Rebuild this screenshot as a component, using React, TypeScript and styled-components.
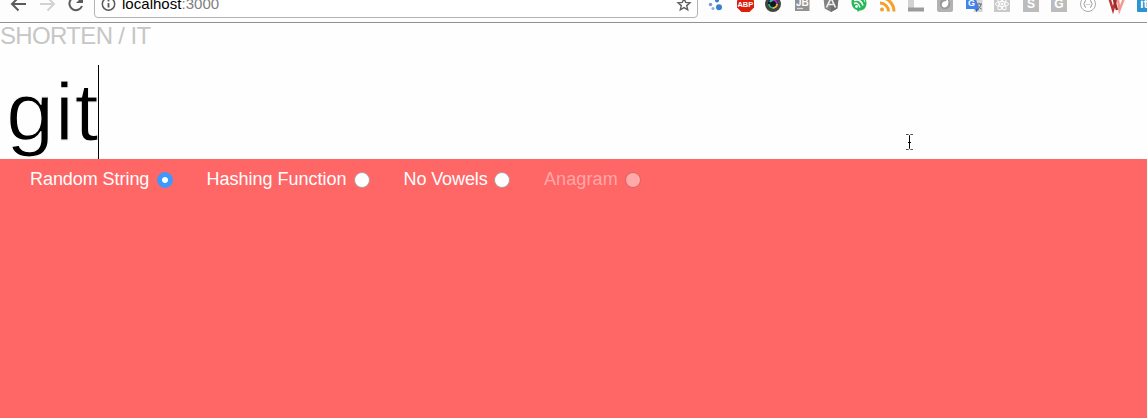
import React, { useState } from "react";
import styled, { createGlobalStyle } from "styled-components";

const GlobalStyle = createGlobalStyle`
  * { box-sizing: border-box; }
  html, body { margin: 0; background: #fefefe; overflow: hidden; }
  body { font-family: "Liberation Sans", Arial, sans-serif; }
`;

const Page = styled.div`
  position: relative;
  display: flex;
  flex-direction: column;
  height: 418px;
  overflow: hidden;
`;

const Toolbar = styled.header`
  display: flex;
  align-items: flex-end;
  flex: none;
  height: 23px;
  overflow: hidden;
  background: #fdfdfd;
  border-bottom: 1px solid #929292;
`;

const ToolbarRow = styled.div`
  display: flex;
  align-items: center;
  flex: none;
  height: 36px;
  width: 1160px;
`;

const NavButtons = styled.div`
  display: flex;
  flex: none;
  width: 94px;
  padding-left: 10px;
  gap: 12px;
`;

const AddressBar = styled.div`
  display: flex;
  align-items: center;
  flex: none;
  width: 604px;
  height: 28px;
  padding: 0 6px;
  border: 1px solid #b3b3b3;
  border-radius: 4px;
  background: #fff;
`;

const Address = styled.span`
  flex: 1;
  margin-left: 6px;
  font-size: 15px;
  line-height: 18px;
  letter-spacing: 0.03px;
  color: #000;
`;

const Port = styled.span`
  color: #808080;
`;

const Extensions = styled.div`
  display: flex;
  margin-left: 4px;
`;

const Slot = styled.span`
  display: flex;
  justify-content: center;
  flex: none;
  width: 28.6px;
`;

const Glyph = styled.svg`
  display: block;
  flex: none;
  overflow: visible;
  font-family: "Liberation Sans", Arial, sans-serif;
`;

const Title = styled.h1`
  flex: none;
  height: 42px;
  margin: 0;
  font-size: 24px;
  font-weight: 400;
  line-height: 25px;
  letter-spacing: -0.65px;
  color: #c6c6c6;
`;

const Entry = styled.div`
  display: flex;
  align-items: stretch;
  flex: none;
  height: 94px;
  padding-left: 6px;
`;

const EntryText = styled.span`
  width: 92px;
  font-size: 81px;
  line-height: 94px;
  letter-spacing: 0.5px;
  white-space: nowrap;
  color: #000;
  transform: scaleX(1.07);
  transform-origin: left center;
  -webkit-text-stroke: 1.2px #fefefe;
`;

const Caret = styled.span`
  position: relative;
  width: 1px;
  background: #000;
`;

const Panel = styled.main`
  flex: 1;
  padding: 9px 30px;
  background: #ff6666;
`;

const Options = styled.div`
  display: flex;
  gap: 34px;
`;

const Option = styled.label<{ $width: number; $tracking: number; $disabled?: boolean }>`
  display: flex;
  align-items: center;
  justify-content: space-between;
  width: ${(p) => p.$width}px;
  font-size: 18px;
  line-height: 22px;
  letter-spacing: ${(p) => p.$tracking}px;
  white-space: nowrap;
  color: ${(p) => (p.$disabled ? "#ffa8a8" : "#fff")};
`;

const Radio = styled.input`
  appearance: none;
  flex: none;
  width: 16px;
  height: 16px;
  margin: 2px 0 0;
  border: 1px solid #b99a9a;
  border-radius: 50%;
  background: #fff;

  &:checked {
    border-color: #3b99fc;
    background: radial-gradient(circle, #fff 2.5px, #3b99fc 3.5px);
  }

  &:disabled {
    border-color: #d96464;
    background: #ffa9a9;
  }
`;

const Pointer = styled.svg`
  position: absolute;
  left: 905px;
  top: 134px;
`;

const extensions = [
  <g fill="#3a7fc8"><circle cx="2.500" cy="8.500" r="1.700" opacity=".75" /><circle cx="9" cy="4.500" r="2" /><circle cx="11" cy="11.300" r="3" /><circle cx="5" cy="12.500" r="1.600" opacity=".6" /></g>,
  <g><path d="M4.500 0h8L17 4.500v7L12.500 16h-8L0 11.500v-7Z" fill="#dc1e0c" /><text x="8.300" y="10.700" textAnchor="middle" fontSize="7.500" fontWeight="700" fill="#fff">ABP</text></g>,
  <g><circle cx="8" cy="8" r="8" fill="#444" /><circle cx="8" cy="8" r="5.200" fill="#141719" /><path d="M5 6a4 4 0 0 1 3-2" stroke="#28c0cc" strokeWidth="2" fill="none" /><path d="M8 4a4 4 0 0 1 4 4" stroke="#9c35c0" strokeWidth="2" fill="none" /><path d="M12 8a4 4 0 0 1-4 4" stroke="#ddb637" strokeWidth="2" fill="none" /><path d="M8 12a4 4 0 0 1-4-4" stroke="#2dac73" strokeWidth="2" fill="none" /></g>,
  <g><path d="M1 0h14.500v15H1Z" fill="#929292" /><text x="8.300" y="9.700" textAnchor="middle" fontSize="10" fontWeight="700" fill="#fff">JB</text><path d="M3 12.500h6" stroke="#ddd" strokeWidth="1.300" /></g>,
  <g><path d="m8 0 7.500 2.500-1.200 10L8 16l-6.300-3.500-1.200-10Z" fill="#828282" /><path d="M8 0v16l6.300-3.500 1.200-10Z" fill="#707070" /><path d="m3.500 11.500 4.500-9.500 4.500 9.500M5.500 8.500h5" stroke="#eee" strokeWidth="1.700" fill="none" /></g>,
  <g fill="none"><path d="M.5 6C.5 1 4 0 8 0s7.500 2 7.500 7-3 7.500-7 7.500l-1.500 1.500-1-2C2.500 13 .5 10 .5 6Z" fill="#27b858" /><path d="M3 7.500q4-2 6 4M3 4.500q7-2 9 5" stroke="#fff" strokeWidth="1.500" /><path d="M9.500 1A6 6 0 0 1 14 6" stroke="#d7f2df" /><circle cx="5.500" cy="10.500" r="1.400" fill="#fff" /></g>,
  <g fill="none" stroke="#f2a12f" strokeWidth="3"><path d="M0 7a8.500 8.500 0 0 1 8.500 8.500M0 1.500a14 14 0 0 1 14 14" /><circle cx="2" cy="13.500" r="2" fill="#f2a12f" stroke="none" /></g>,
  <g><path d="M0 0h6v12H0Z" fill="#d2d2d2" /><path d="M0 11.500h16v4H0Z" fill="#9b9b9b" /></g>,
  <g><rect width="16" height="16" rx="2" fill="#b2b2b2" /><circle cx="8" cy="8" r="5.300" fill="#999" /><path d="M10.500 3.500c2 3 .5 8-3 8-3-.5-3.500-3.500-1.500-5.500 1.500-1 3-.5 4.500-2.500Z" fill="#fff" /></g>,
  <g><path d="M6 4h10.500v12H8Z" fill="#d5d5d5" /><path d="M0 0h9l4 13H0Z" fill="#3f83ed" /><text x="5.500" y="9.800" textAnchor="middle" fontSize="9" fontWeight="700" fill="#fff">G</text><path d="m9 13 4 0-2.500 3Z" fill="#285fc5" /><path d="M10.500 8h5.500m-3-1v1m2 0c-.5 3-2 4-3.500 5m0-4c1 2 2 3 4 4" stroke="#606b7c" fill="none" /></g>,
  <g><rect width="16" height="16" fill="#c9c9c9" /><g fill="none" stroke="#fff" strokeWidth="1"><ellipse cx="8" cy="8" rx="6.500" ry="2.500" /><ellipse cx="8" cy="8" rx="6.500" ry="2.500" transform="rotate(60 8 8)" /><ellipse cx="8" cy="8" rx="6.500" ry="2.500" transform="rotate(120 8 8)" /></g><circle cx="8" cy="8" r="1.300" fill="#fff" /></g>,
  <g><rect width="16" height="16" fill="#bcbcbc" /><text x="8" y="12.300" textAnchor="middle" fontSize="12" fontWeight="700" fill="#fff">S</text></g>,
  <g><rect width="16" height="16" fill="#bcbcbc" /><text x="8" y="12.300" textAnchor="middle" fontSize="12" fontWeight="700" fill="#fff">G</text></g>,
  <g><circle cx="8" cy="8" r="7.500" fill="#fff" stroke="#aaa" /><path d="M6 4.500c-2 0-.5 3-2.500 3.500 2 .5.500 3.500 2.500 3.500m4-7c2 0 .5 3 2.500 3.500-2 .5-.5 3.500-2.500 3.500M6.500 8.500h1m1 0h1" fill="none" stroke="#999" /></g>,
  <g fill="none" strokeWidth="2.500"><path d="m0 1 4 13 3-10" stroke="#b93636" /><path d="m5 4 3 10" stroke="#9e2929" /><path d="m9 4 1.500 10L15.500 1" stroke="#f39a94" /></g>,
  <g><rect width="17" height="16" rx="1" fill="#2e91d1" /><text x="3" y="12.300" fontSize="13" fontWeight="700" fill="#fff">it</text></g>,
];

const choices = [
  { label: "Random String", width: 142.5, tracking: -0.06 },
  { label: "Hashing Function", width: 163, tracking: 0 },
  { label: "No Vowels", width: 106.5, tracking: -0.1 },
  { label: "Anagram", width: 97, tracking: 0.1, disabled: true },
];

export default function App() {
  const [selected, setSelected] = useState("Random String");
  return (
    <Page>
      <GlobalStyle />
      <Toolbar>
        <ToolbarRow>
          <NavButtons>
            <Glyph width="17" height="16" fill="none" stroke="#5b5b5b" strokeWidth="2"><path d="M16 8H2M8.500 1.500 2 8l6.500 6.500" /></Glyph>
            <Glyph width="17" height="16" fill="none" stroke="#d3d3d3" strokeWidth="2"><path d="M1 8h14M8.500 1.500 15 8l-6.500 6.500" /></Glyph>
            <Glyph width="17" height="16" fill="none" stroke="#5b5b5b" strokeWidth="2"><path d="M12.500 3A6.500 6.500 0 1 0 14 10" /><path d="M15 0v7H8Z" fill="#5b5b5b" stroke="none" /></Glyph>
          </NavButtons>
          <AddressBar>
            <Glyph width="15" height="16" fill="none" stroke="#5a5a5a" strokeWidth="1.500"><circle cx="7.500" cy="8" r="6.200" /><path d="M7.500 7v4.500M7.500 4v1.600" strokeWidth="1.800" /></Glyph>
            <Address>localhost<Port>:3000</Port></Address>
            <Glyph width="16" height="16" fill="none" stroke="#606060" strokeWidth="1.400"><path d="m9 2.500 1.700 3.900 4.300.4-3.300 2.800 1 4.200L9 11.600l-3.700 2.200 1-4.200L3 6.800l4.300-.4Z" /></Glyph>
          </AddressBar>
          <Extensions>
            {extensions.map((art, i) => (
              <Slot key={i}><Glyph width="16" height="16">{art}</Glyph></Slot>
            ))}
          </Extensions>
        </ToolbarRow>
      </Toolbar>
      <Title>SHORTEN / IT</Title>
      <Entry><EntryText>git</EntryText><Caret /></Entry>
      <Panel>
        <Options>
          {choices.map((c) => (
            <Option key={c.label} $width={c.width} $tracking={c.tracking} $disabled={c.disabled}>
              {c.label}
              <Radio type="radio" name="method" disabled={c.disabled} checked={selected === c.label} onChange={() => setSelected(c.label)} />
            </Option>
          ))}
        </Options>
      </Panel>
      <Pointer width="9" height="17" fill="none">
        <path d="M1 .5h2.500l1 1 1-1H8M1 15.500h2.500l1-1 1 1H8" stroke="#555" />
        <path d="M4.500 1.500v13M3 8.500h3" stroke="#000" />
      </Pointer>
    </Page>
  );
}
